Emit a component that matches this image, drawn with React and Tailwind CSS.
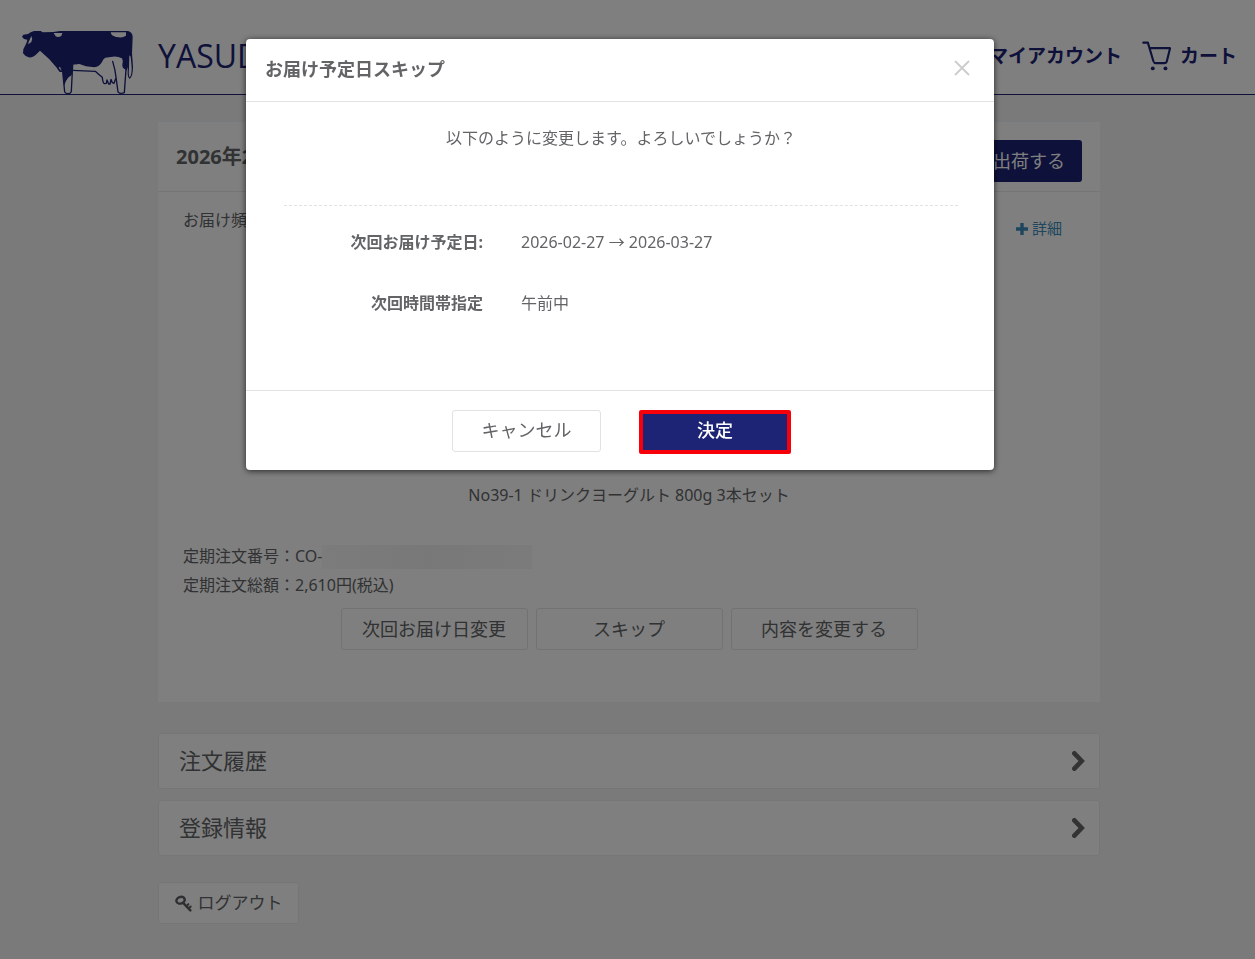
import React from "react";

function CowLogo() {
  return (
    <svg viewBox="66 90 336 195" className="block h-[65px] w-28" aria-hidden="true">
      <path
        fill="#1d2375"
        d="M66 110 L70 104 L84 102 L92 97 L102 93 L122 93 L128 97 L160 96 L180 93 L384 93 Q397 96 398 110 L396 160 L399 200 Q399 228 389 237 Q382 232 383 214 L384 200 L380 212 L376 208 Q366 204 367 194 Q371 184 366 175 Q352 168 338 170 L316 173 Q310 176 306 186 Q298 200 283 202 L258 199 L238 192 L218 194 L216 222 Q212 232 206 232 Q198 240 192 258 L188 216 L174 208 L148 178 L120 152 L106 166 Q98 174 86 172 Q74 168 69 160 L70 148 L79 130 L82 119 L72 117 Z"
      />
      <path
        fill="#fff"
        d="M161 99 H187 L184 108 Q175 113 167 109 Z M332 97 H378 V107 Q368 114 356 112 Q340 111 334 103 Z M94 108 Q99 116 94 126 L85 133 Q83 128 89 119 Z M388 166 L392 170 L395 200 Q396 224 389 232 Q385 226 387 206 Z M196 252 Q204 230 213 228 L213 277 H195 Z M176 204 L185 212 L180 200 Z"
      />
      <g fill="none" stroke="#1d2375" strokeWidth="4" strokeLinejoin="round" strokeLinecap="round">
        <path d="M188 214 L194 276 Q197 281 204 281 Q212 281 214 274 L218 194" />
        <path d="M174 206 L180 214 H188" />
        <path d="M218 211 L286 214 Q296 224 307 232 Q308 248 313 251 L319 250 L321 240 L326 252 L330 252 L333 238 L337 248 L342 250 L347 236" />
        <path d="M338 184 Q346 210 348 232 L354 276 Q362 283 373 278 L378 208" />
      </g>
    </svg>
  );
}

function CartIcon() {
  return (
    <svg viewBox="609 124 90 92" className="block h-[30px] w-[30px]" aria-hidden="true">
      <path
        d="M612 129 H626 L643 186 Q645 192 651 192 H677 Q683 192 684 187 L694 146 H632"
        fill="none"
        stroke="#1d2375"
        strokeWidth="6.5"
        strokeLinejoin="round"
        strokeLinecap="round"
      />
      <circle cx="641" cy="208" r="6" fill="#1d2375" />
      <circle cx="680" cy="208" r="6" fill="#1d2375" />
    </svg>
  );
}

function Chevron() {
  return (
    <svg viewBox="0 0 39 60" className="block h-5 w-[13px]" aria-hidden="true">
      <path d="M7 7 L29 30 L7 53" fill="none" stroke="#666" strokeWidth="14" strokeLinecap="round" />
    </svg>
  );
}

function PlusIcon() {
  return (
    <svg viewBox="0 0 12 12" className="block h-3 w-3" aria-hidden="true">
      <path d="M6 0 V12 M0 6 H12" stroke="currentColor" strokeWidth="3.4" />
    </svg>
  );
}

function KeyIcon() {
  return (
    <svg viewBox="73 526 52 50" className="block h-[17px] w-[17px]" aria-hidden="true">
      <g fill="none" stroke="#5c5e60" strokeLinecap="round">
        <ellipse cx="90" cy="541" rx="13" ry="10" strokeWidth="7.5" transform="rotate(-20 90 541)" />
        <path d="M98 549 L120 572" strokeWidth="7.5" />
        <path d="M108 560 L114 553 M115 566 L121 560" strokeWidth="6" />
      </g>
    </svg>
  );
}

function OutlineButton({ children }) {
  return (
    <button
      type="button"
      className="h-[42px] w-[187px] rounded-[3px] border border-[#e4e4e4] bg-white text-lg leading-6"
    >
      {children}
    </button>
  );
}

function PanelLink({ children }) {
  return (
    <a
      href="#"
      className="flex h-14 items-center justify-between rounded-[3px] border border-[#ededed] bg-white pr-3.5 pl-5 text-[22px]"
    >
      <span className="pb-0.5">{children}</span>
      <Chevron />
    </a>
  );
}

function Header() {
  return (
    <header className="flex h-[95px] items-start border-b border-[#1d2375] bg-white pt-[30px] pr-[18px] pl-[22px] text-[#1d2375]">
      <a href="#" className="flex">
        <span className="-mb-px">
          <CowLogo />
        </span>
        <span className="ml-6 flex h-[52px] items-center font-['Open_Sans',sans-serif] text-[32px] whitespace-nowrap">
          YASUD
        </span>
      </a>
      <nav className="ml-auto flex h-[52px] items-center gap-5 text-[19px] font-bold whitespace-nowrap">
        <a href="#">マイアカウント</a>
        <a href="#" className="flex items-center gap-2">
          <CartIcon />
          カート
        </a>
      </nav>
    </header>
  );
}

function Subscription() {
  return (
    <section className="border-t-[3px] border-[#f1f4f8] bg-white">
      <div className="flex h-[70px] items-center justify-between border-b border-[#eaeaea] px-[18px]">
        <h2 className="text-xl font-bold">2026年2月27日</h2>
        <button type="button" className="mt-2 h-[42px] rounded-[3px] bg-[#1d2375] px-[17px] text-lg leading-6 text-white">
          今すぐ出荷する
        </button>
      </div>
      <div className="px-[25px] pt-3.5 pb-[52px] text-base leading-[29px]">
        <div className="flex justify-between">
          <p>お届け頻度：1ヶ月ごと</p>
          <a href="#" className="mt-2 mr-[13px] flex items-center gap-1 text-[15px] text-[#3c8dbc]">
            <PlusIcon />
            詳細
          </a>
        </div>
        <p className="mt-[238px] text-center">No39-1 ドリンクヨーグルト 800g 3本セット</p>
        <div className="mt-8 flex items-center">
          <span>定期注文番号：CO-</span>
          <span className="h-6 w-[210px] bg-linear-to-r from-[#f8f8f8] via-[#f1f1f1] to-[#f7f7f7]" />
        </div>
        <p>定期注文総額：2,610円(税込)</p>
        <div className="mt-2 flex justify-center gap-2">
          <OutlineButton>次回お届け日変更</OutlineButton>
          <OutlineButton>スキップ</OutlineButton>
          <OutlineButton>内容を変更する</OutlineButton>
        </div>
      </div>
    </section>
  );
}

function SkipDialog() {
  return (
    <div className="fixed inset-0 flex items-start justify-center bg-black/50 pt-[39px] pr-[15px]">
      <div
        role="dialog"
        aria-modal="true"
        aria-labelledby="skip-title"
        className="w-full max-w-[748px] rounded-[4px] bg-white shadow-[0_1px_6px_rgba(0,0,0,0.7)]"
      >
        <div className="flex items-start justify-between border-b border-[#e2e2e2] pt-[18px] pr-6 pb-5 pl-[19px]">
          <h1 id="skip-title" className="text-lg leading-6 font-bold">
            お届け予定日スキップ
          </h1>
          <button type="button" aria-label="閉じる" className="mt-[3px]">
            <svg viewBox="0 0 16 16" className="block h-4 w-4">
              <path d="M1 1 L15 15 M15 1 L1 15" stroke="#ccc" strokeWidth="1.8" fill="none" />
            </svg>
          </button>
        </div>
        <div className="pt-6 pr-9 pb-[75px] pl-[38px] text-base leading-6">
          <p className="text-center">以下のように変更します。よろしいでしょうか？</p>
          <dl className="mt-[55px] grid grid-cols-[199px_1fr] gap-x-[38px] gap-y-[37px] border-t border-dashed border-[#e2e2e2] pt-6">
            <dt className="text-right font-bold">次回お届け予定日:</dt>
            <dd>2026-02-27 → 2026-03-27</dd>
            <dt className="text-right font-bold">次回時間帯指定</dt>
            <dd>午前中</dd>
          </dl>
        </div>
        <div className="flex justify-center gap-[38px] border-t border-[#e2e2e2] pt-[19px] pb-4 pl-[3px] text-lg leading-6">
          <button type="button" className="h-[42px] w-[149px] rounded-[3px] border border-[#e2e2e2] bg-white pb-0.5">
            キャンセル
          </button>
          <button
            type="button"
            className="h-11 w-[152px] rounded-[2px] border-4 border-[#f80009] bg-[#1d2375] pb-1 font-medium text-white"
          >
            決定
          </button>
        </div>
      </div>
    </div>
  );
}

export default function App() {
  return (
    <div className="min-h-screen bg-[#f4f4f4] font-['Noto_Sans','Noto_Sans_CJK_JP',sans-serif] text-[#626466]">
      <Header />
      <div className="pt-6 pb-[35px] pl-[3px]">
        <main className="mx-auto w-full max-w-[942px]">
          <Subscription />
          <div className="mt-[31px] flex flex-col gap-[11px]">
            <PanelLink>注文履歴</PanelLink>
            <PanelLink>登録情報</PanelLink>
          </div>
          <button
            type="button"
            className="mt-[26px] flex h-[42px] w-[141px] items-center justify-center gap-1.5 rounded-[3px] border border-[#ededed] bg-white text-[17px] leading-6"
          >
            <KeyIcon />
            ログアウト
          </button>
        </main>
      </div>
      <SkipDialog />
    </div>
  );
}
